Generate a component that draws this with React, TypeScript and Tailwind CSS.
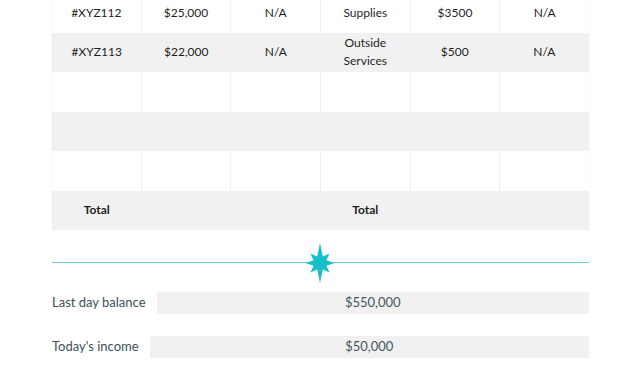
import React from 'react';

type Row = string[];

const rows: (Row | null)[] = [
  ['#XYZ112', '$25,000', 'N/A', 'Supplies', '$3500', 'N/A'],
  ['#XYZ113', '$22,000', 'N/A', 'Outside\nServices', '$500', 'N/A'],
  null,
  null,
  null,
];

const Star: React.FC = () => (
  <svg width="48" height="44" viewBox="-24 -22 48 44" className="shrink-0">
    <defs>
      <filter id="soft" x="-50%" y="-50%" width="200%" height="200%">
        <feGaussianBlur stdDeviation="0.8" />
      </filter>
    </defs>
    {/* faint glow rays */}
    <path d="M-17 -12 L0 -1.2 L0 1.2 Z" fill="#a6e3e7" opacity="0.7" filter="url(#soft)" />
    <path d="M12 -9 L0 -1 L0 1 Z" fill="#a6e3e7" opacity="0.5" filter="url(#soft)" />
    <path
      d="M0 -20 L2.8 -6.4 L9.5 -9.5 L6.4 -2.8 L14.5 0 L6.4 2.8 L9.5 9.5 L2.8 6.4 L0 20 L-2.8 6.4 L-9.5 9.5 L-6.4 2.8 L-14.5 0 L-6.4 -2.8 L-9.5 -9.5 L-2.8 -6.4 Z"
      fill="#16c0cb"
    />
  </svg>
);

const Field: React.FC<{ label: string; value: string }> = ({ label, value }) => (
  <div className="flex items-center gap-[11px]">
    <span className="text-[13px] text-[#3e5059] whitespace-nowrap">{label}</span>
    <div className="flex-1 h-[22px] bg-[#f1f1f1] flex items-center justify-center text-[13px] text-[#46565d]">
      {value}
    </div>
  </div>
);

export default function App() {
  return (
    <div className="w-[630px] h-[380px] overflow-hidden bg-white" style={{ fontFamily: 'Lato, "Noto Sans", sans-serif' }}>
      <div className="ml-[52px] w-[537px] -mt-[7px]">
        {/* table */}
        <div className="shadow-[0_0_2px_rgba(0,0,0,0.07)] text-[12px] text-[#1f1f1f]">
          {rows.map((r, i) => {
            const grey = i % 2 === 1;
            return (
              <div
                key={i}
                className={`grid grid-cols-6 h-[39.5px] ${grey ? 'bg-[#f1f1f1]' : 'bg-[#f0f0f0] gap-x-px'}`}
              >
                {Array.from({ length: 6 }).map((_, j) => (
                  <div
                    key={j}
                    className={`flex items-center justify-center text-center leading-[18px] whitespace-pre-line ${grey ? '' : 'bg-white'}`}
                  >
                    {r ? r[j] : ''}
                  </div>
                ))}
              </div>
            );
          })}
          <div className="grid grid-cols-6 h-[39px] bg-[#f1f1f1] font-bold">
            <div className="flex items-center justify-center">Total</div>
            <div />
            <div />
            <div className="flex items-center justify-center">Total</div>
            <div />
            <div />
          </div>
        </div>

        {/* divider */}
        <div className="relative mt-[11px] h-[44px] flex items-center">
          <div className="flex-1 h-[1.5px] bg-[#6acfd5]" />
          <div className="absolute left-[244px] top-0">
            <Star />
          </div>
        </div>

        {/* fields */}
        <div className="mt-[7px] flex flex-col gap-[22px]">
          <Field label="Last day balance" value="$550,000" />
          <Field label="Today's income" value="$50,000" />
          <div className="flex">
            <div className="ml-[113px] flex-1 h-[22px] bg-[#f1f1f1]" />
          </div>
        </div>
      </div>
    </div>
  );
}
